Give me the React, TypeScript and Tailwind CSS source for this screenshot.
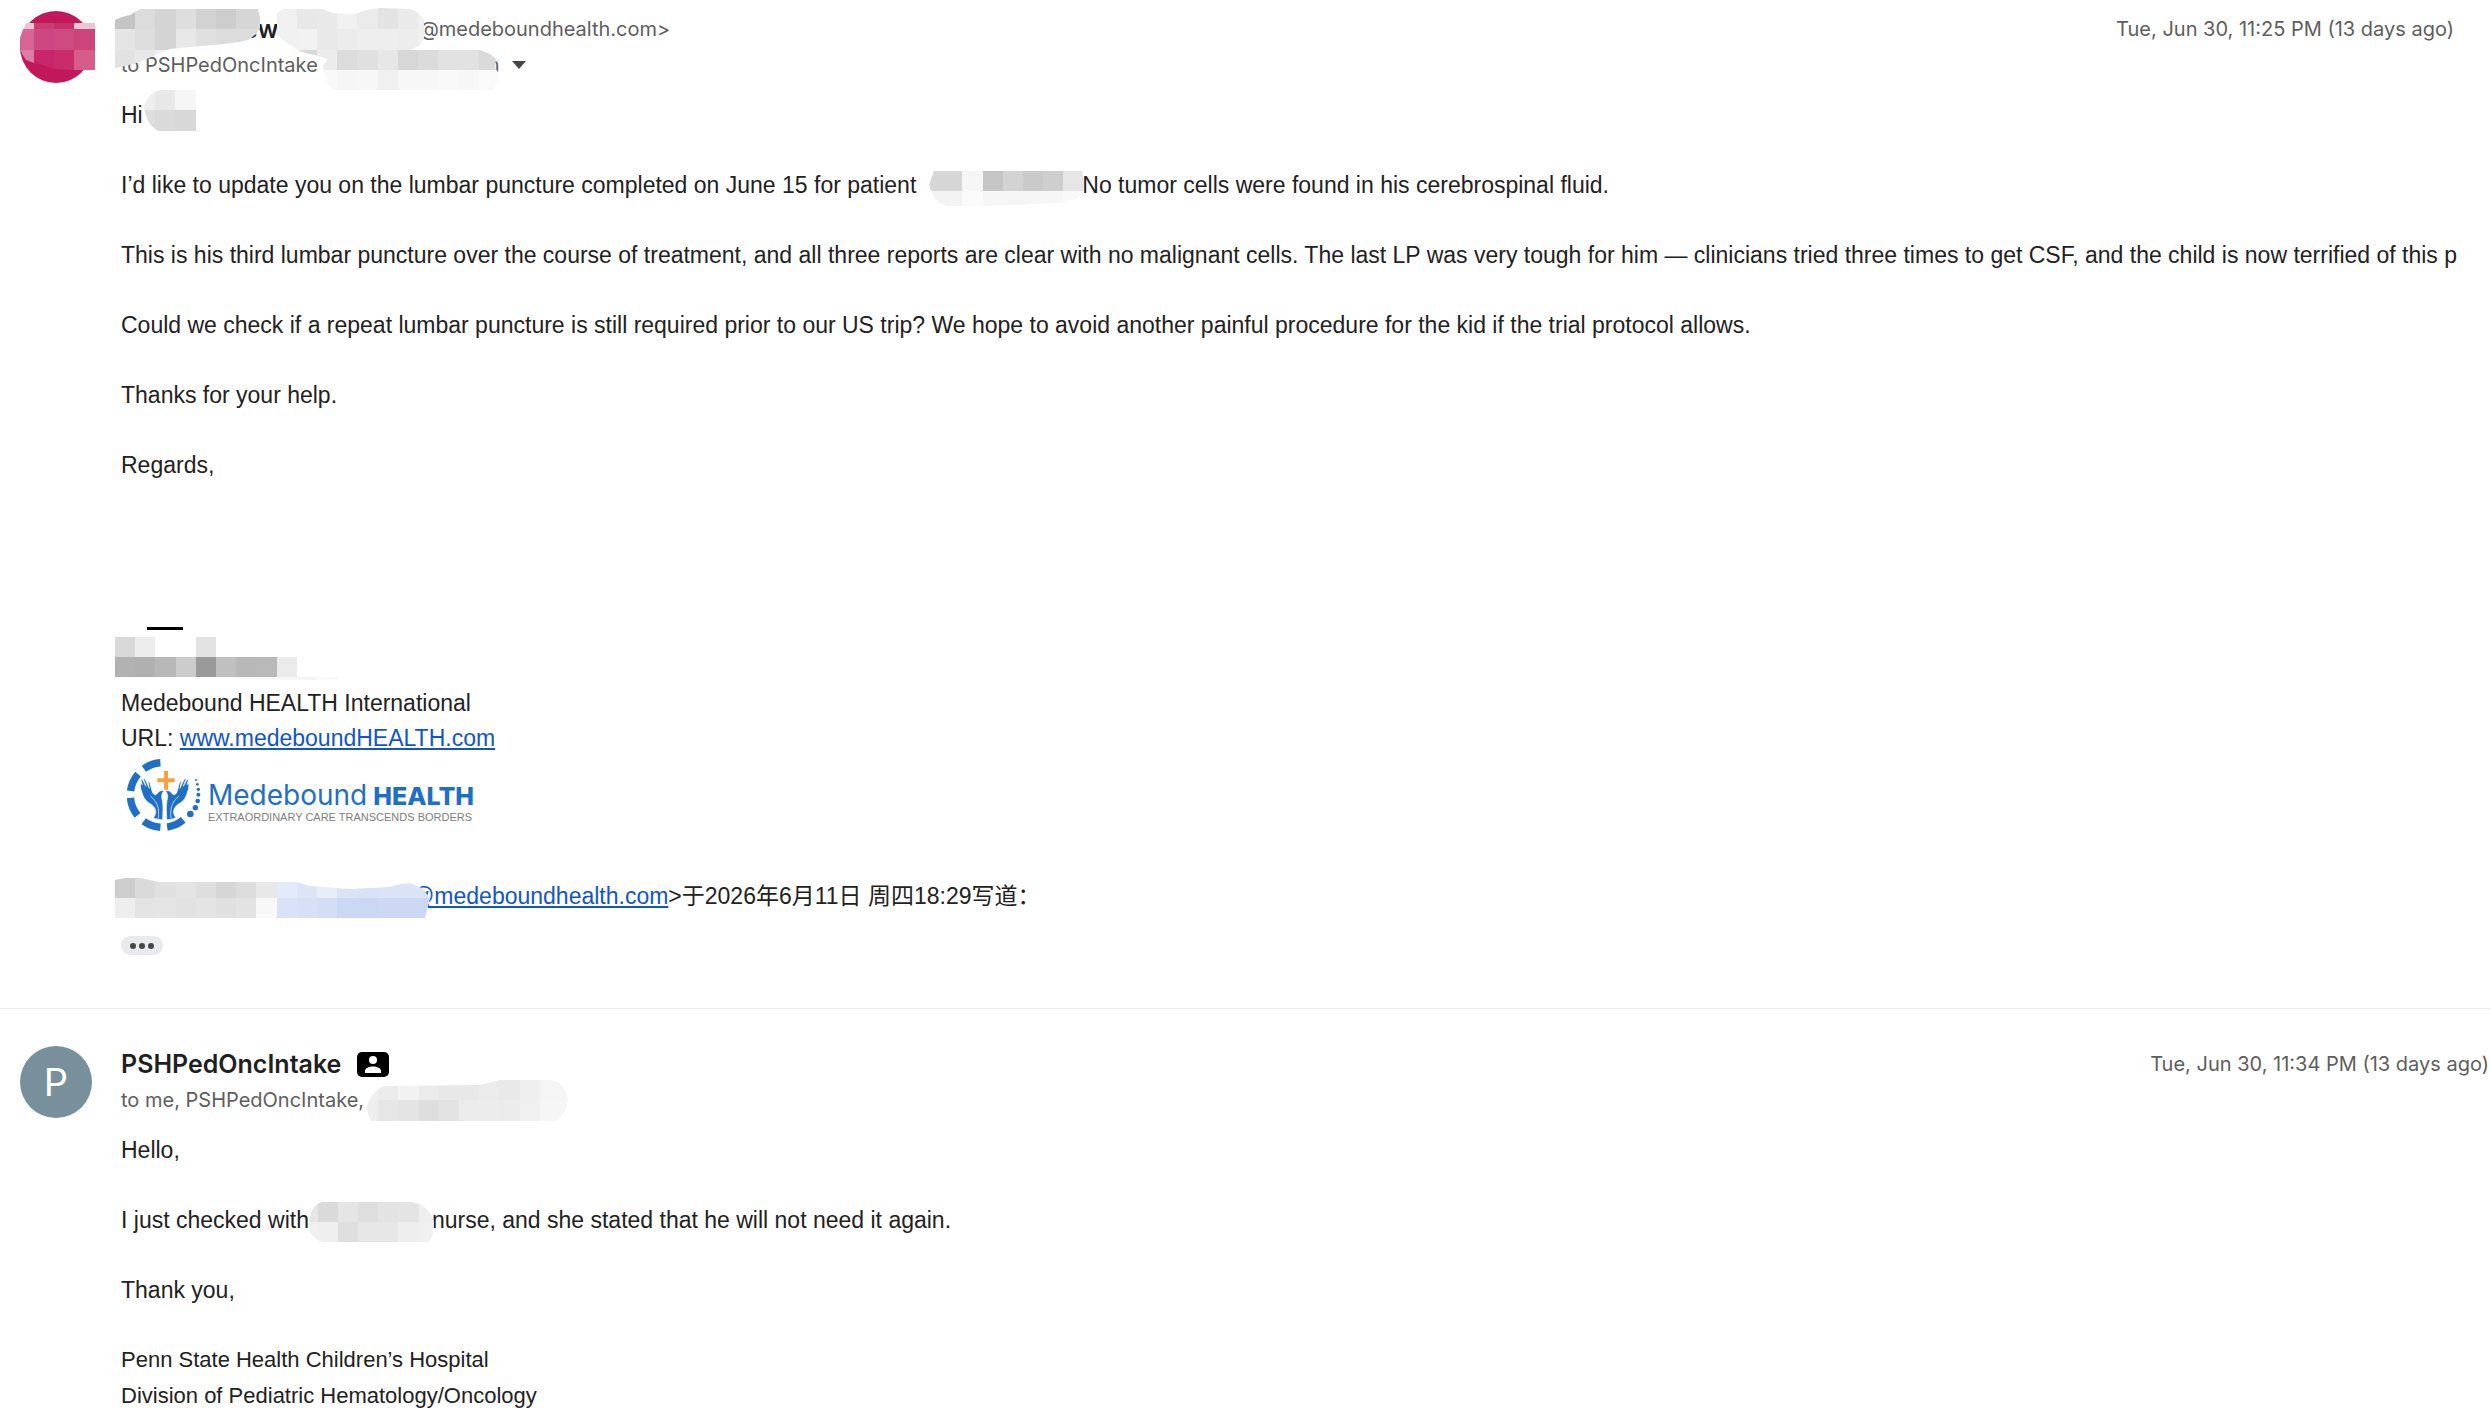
import { ReactNode } from 'react';

type Row = {
  x: number;
  y: number;
  h: number;
  colors: string[];
};

interface MosaicProps {
  id: string;
  viewBox: string;
  outline: string;
  rows: Row[];
  className: string;
}

const CELL = 20.2;

// Pixelated cover that hides a private name or address
function Mosaic({ id, viewBox, outline, rows, className }: MosaicProps) {
  return (
    <svg viewBox={viewBox} className={`absolute ${className}`} aria-hidden="true">
      <clipPath id={id}>
        <path d={outline} />
      </clipPath>
      <g clipPath={`url(#${id})`} shapeRendering="crispEdges">
        {rows.map((row) =>
          row.colors.map((color, i) => (
            <rect
              key={`${row.y}-${i}`}
              x={row.x + i * CELL}
              y={row.y}
              width={CELL + 0.3}
              height={row.h}
              fill={color}
            />
          ))
        )}
      </g>
    </svg>
  );
}

interface MessageProps {
  avatar: ReactNode;
  sender: ReactNode;
  recipients: ReactNode;
  date: string;
  className: string;
  children: ReactNode;
}

function Message({ avatar, sender, recipients, date, className, children }: MessageProps) {
  return (
    <article className={`flex gap-[29px] pl-5 ${className}`}>
      {avatar}
      <div className="min-w-0 flex-1">
        <header className="relative font-[Inter,sans-serif] text-[20px] leading-[36px] text-[#5e5e5e]">
          <div className="flex justify-between">
            <div className="flex items-center">{sender}</div>
            <time>{date}</time>
          </div>
          <div className="flex items-center">{recipients}</div>
        </header>
        <div className="mt-[15px]">{children}</div>
      </div>
    </article>
  );
}

function LogoHand() {
  return (
    <path d="M190 650 C202 636 198 621 185 611 C172 604 163 595 158 581 L152 562 L151 546 L157 551 L152 534 L158 537 L168 556 L159 531 L165 534 L178 562 L174 541 L179 543 L187 573 C191 582 198 584 203 576 C208 569 216 567 222 570 C214 577 214 588 217 599 C221 616 218 636 218 656 C208 656 199 654 190 650 Z" />
  );
}

function Logo() {
  return (
    <div className="flex h-20">
      <svg viewBox="93 465 261 240" className="h-20 w-[87px]" role="img" aria-label="Medebound HEALTH">
        <g fill="none" stroke="#1f6fc6" strokeWidth="22">
          <path d="M161.7 503 A97 97 0 0 1 211.2 485.2" />
          <path d="M121.7 570.2 A97 97 0 0 1 144.1 519.1" />
          <path d="M142.6 643 A97 97 0 0 1 121.4 590.5" />
          <path d="M211.2 678.8 A97 97 0 0 1 161 660.5" />
          <path d="M279.7 656.8 A97 97 0 0 1 231.5 678.1" />
        </g>
        <g fill="#1f6fc6" stroke="#fff" strokeWidth="2">
          <LogoHand />
          <g transform="translate(448 0) scale(-1 1)">
            <LogoHand />
          </g>
        </g>
        <g fill="none" stroke="#fff" strokeWidth="2">
          <path d="M181 585 C203 604 208 620 205 652" />
          <path d="M267 585 C245 604 240 620 243 652" />
        </g>
        <path d="M222 510 H234 V532 H254 V544 H234 V566 H222 V544 H202 V532 H222 Z" fill="#f9a03f" />
        <g fill="#1f6fc6">
          <circle cx="301" cy="639" r="10" />
          <circle cx="316" cy="620" r="8" />
          <circle cx="323" cy="600" r="7" />
          <circle cx="325" cy="581" r="6" />
          <circle cx="325" cy="565" r="5" />
          <circle cx="322" cy="550" r="4" />
          <circle cx="318" cy="537" r="3" />
        </g>
      </svg>
      <div className="pt-6">
        <div className="flex items-baseline gap-1.5 font-[Inter,sans-serif] leading-[30px] text-[#1f6fc6]">
          <span className="text-[28px]">Medebound</span>
          <span className="text-[25px] font-extrabold">HEALTH</span>
        </div>
        <div className="text-[11px] leading-[12px] text-[#808080]">EXTRAORDINARY CARE TRANSCENDS BORDERS</div>
      </div>
    </div>
  );
}

function OwnAvatar() {
  return (
    <div className="relative size-[72px] shrink-0 rounded-full bg-[#c2185b]">
      <Mosaic
        id="m-avatar"
        viewBox="20 23 75 47"
        className="left-0 top-3 h-[47px] w-[75px]"
        outline="M26 23 H95 V70 H74 L54 69 L40 64 L34 63 L26 60 L22 54 L20 47 V38 L22 32 Z"
        rows={[
          { x: 13.8, y: 23, h: 6, colors: ['#ecc5d2', '#c83c71', '#c43068', '#ecc5d2', '#ecc5d2'] },
          { x: 13.8, y: 29, h: 21, colors: ['#d66596', '#cd4880', '#cf4a80', '#cd447a', '#cd447a'] },
          { x: 13.8, y: 50, h: 20, colors: ['#dc7da3', '#c82668', '#c92c6a', '#d65c8a', '#d65c8a'] },
        ]}
      />
    </div>
  );
}

export default function App() {
  return (
    <main className="overflow-hidden bg-white pt-[11px] font-['Liberation_Sans','Noto_Sans_CJK_SC',sans-serif] text-[23px] leading-[35px] whitespace-nowrap text-[#222222]">
      <Message
        className="pr-[37px] pb-[53px]"
        date="Tue, Jun 30, 11:25 PM (13 days ago)"
        avatar={<OwnAvatar />}
        sender={
          <>
            <span className="pl-[122px] text-[25px] font-semibold text-[#1f1f1f]">ew</span>
            <span className="pl-[141px]">@medeboundhealth.com&gt;</span>
          </>
        }
        recipients={
          <>
            <span>to PSHPedOncIntake</span>
            <span className="pl-[170px]">n</span>
            <button type="button" aria-label="Show details" className="ml-3">
              <svg viewBox="0 0 14 8" className="h-2 w-3.5" fill="#444746">
                <path d="M0 0 H14 L7 8 Z" />
              </svg>
            </button>
            <Mosaic
              id="m-sender"
              viewBox="115 8 146 61"
              className="-top-[3px] -left-1.5 h-[61px] w-[146px]"
              outline="M115 20 L122 17 L130 15 L140 9 H258 L260 17 V28 L256 34 L250 39 L240 42 L215 45 L190 47 L170 49 L158 54 L140 62 L125 66 L115 68 Z"
              rows={[
                { x: 115, y: 8, h: 21, colors: ['#c4c4c4', '#dcdcdc', '#d4d4d4', '#dedede', '#d2d2d2', '#cdcdcd', '#d6d6d6', '#d6d6d6'] },
                { x: 115, y: 29, h: 21, colors: ['#e5e5e5', '#dedede', '#d4d4d4', '#e8e8e8', '#e0e0e0', '#dcdcdc', '#dcdcdc', '#dcdcdc'] },
                { x: 115, y: 50, h: 20, colors: ['#e2e2e2', '#e8e8e8', '#eeeeee'] },
              ]}
            />
            <Mosaic
              id="m-address"
              viewBox="275 8 227 82"
              className="-top-[3px] left-[154px] h-[82px] w-[227px]"
              outline="M275 20 L277 13 L283 9 H322 L333 13 L355 14 L366 10 L380 8 L410 9 L419 13 L424 20 V38 L420 45 L411 50 H480 L490 54 L496 59 L495 68 L498 72 L498 80 L494 90 H334 L328 85 L325 75 L323 66 L328 59 L315 55 L305 53 L298 50 L283 40 L277 34 Z"
              rows={[
                { x: 276.6, y: 8, h: 21, colors: ['#f0f0f0', '#e8e8e8', '#e9e9e9', '#f1f1f1', '#ebebeb', '#e3e3e3', '#eaeaea', '#f0f0f0'] },
                { x: 276.6, y: 29, h: 21, colors: ['#f0f0f0', '#f2f2f2', '#e9e9e9', '#ececec', '#eeeeee', '#eeeeee', '#ededed', '#f0f0f0'] },
                { x: 296.8, y: 50, h: 20, colors: ['#d8d8d8', '#ececec', '#dcdcdc', '#e0e0e0', '#e7e7e7', '#d7d7d7', '#dbdbdb', '#e2e2e2', '#e2e2e2', '#dadada', '#dadada'] },
                { x: 317, y: 70, h: 20, colors: ['#f9f9f9', '#f6f6f6', '#f7f7f7', '#f0f0f0', '#f7f7f7', '#f7f7f7', '#f9f9f9', '#f7f7f7', '#fafafa', '#fafafa'] },
              ]}
            />
          </>
        }
      >
        <p className="relative">
          Hi
          <Mosaic
            id="m-greeting"
            viewBox="144 87 52 44"
            className="-top-[11px] left-[23px] h-11 w-[52px]"
            outline="M196 90 H160 Q146 94 144 108 Q146 124 158 131 H196 Z"
            rows={[
              { x: 135, y: 87, h: 23, colors: ['#eeeeee', '#e8e8e8', '#f6f6f6', '#f6f6f6'] },
              { x: 135, y: 110, h: 21, colors: ['#dedede', '#dadada', '#d8d8d8', '#d8d8d8'] },
            ]}
          />
        </p>
        <p className="mt-[35px]">
          I’d like to update you on the lumbar puncture completed on June 15 for patient
          <span className="relative inline-block w-[166px]">
            <Mosaic
              id="m-patient"
              viewBox="932 171 155 36"
              className="-top-[22px] left-[13px] h-9 w-[155px]"
              outline="M937 171 H1085 L1087 180 L1086 191 Q1082 200 1070 202 L1025 205 L986 206 H950 Q938 203 935 193 L932 185 Z"
              rows={[
                { x: 925, y: 171, h: 20, colors: ['#d6d6d6', '#d6d6d6', '#f6f6f6', '#c6c6c6', '#d3d3d3', '#cacaca', '#cecece', '#e6e6e6', '#e6e6e6'] },
                { x: 925, y: 191, h: 16, colors: ['#f3f3f3', '#f3f3f3', '#fafafa', '#f6f6f6', '#f6f6f6', '#f6f6f6', '#f6f6f6', '#f9f9f9', '#f9f9f9'] },
              ]}
            />
          </span>
          No tumor cells were found in his cerebrospinal fluid.
        </p>
        <p className="mt-[35px]">
          This is his third lumbar puncture over the course of treatment, and all three reports are clear with no
          malignant cells. The last LP was very tough for him — clinicians tried three times to get CSF, and the child is
          now terrified of this p
        </p>
        <p className="mt-[35px]">
          Could we check if a repeat lumbar puncture is still required prior to our US trip? We hope to avoid another
          painful procedure for the kid if the trial protocol allows.
        </p>
        <p className="mt-[35px]">Thanks for your help.</p>
        <p className="mt-[35px]">Regards,</p>

        <hr className="mt-[144px] ml-[26px] h-[3px] w-9 border-0 bg-black" />
        <div className="relative h-14">
          <Mosaic
            id="m-signature"
            viewBox="115 635 240 48"
            className="top-[5px] -left-1.5 h-12 w-60"
            outline="M115 637 L135 635 H196 V637 H353 V678 L323 680 H115 Z"
            rows={[
              { x: 115, y: 637, h: 20, colors: ['#d9d9d9', '#ededed', '#ffffff', '#ffffff', '#e3e3e3'] },
              { x: 115, y: 657, h: 20, colors: ['#b2b2b2', '#b0b0b0', '#b8b8b8', '#cccccc', '#9a9a9a', '#c0c0c0', '#b8b8b8', '#b9b9b9', '#ebebeb'] },
              { x: 216, y: 677, h: 3, colors: ['#fefefe', '#fafafa', '#f9f9f9', '#f7f7f7', '#f5f5f5', '#fafafa'] },
            ]}
          />
        </div>
        <p>Medebound HEALTH International</p>
        <p>
          URL:{' '}
          <a href="#website" className="text-[#1155cc] underline">
            www.medeboundHEALTH.com
          </a>
        </p>
        <Logo />

        <p className="relative mt-[43px] pl-[290px]">
          <a href="#mail" className="text-[#1155cc] underline">
            @medeboundhealth.com
          </a>
          &gt;于2026年6月11日 周四18:29写道：
          <Mosaic
            id="m-quote"
            viewBox="115 877 315 42"
            className="-top-0.5 -left-1.5 h-[42px] w-[315px]"
            outline="M115 880 L125 878 H140 L160 882 H297 L310 886 L350 889 L390 887 L400 884 L410 883 L422 888 L430 898 L425 918 H115 Z"
            rows={[
              { x: 115, y: 877, h: 21, colors: ['#cdcdcd', '#dadada', '#e0e0e0', '#e4e4e4', '#dedede', '#d6d6d6', '#dcdcdc', '#e8e8e8', '#e3eaf8', '#dce4f6', '#e9ecf9', '#dbe4f7', '#d8e1f6', '#dbe4f7', '#dbe4f7', '#dbe4f7'] },
              { x: 115, y: 898, h: 20, colors: ['#eeeeee', '#e4e4e4', '#e5e5e5', '#e2e2e2', '#e4e4e4', '#e0e0e0', '#e3e3e3', '#f8f8f8', '#d9e2f7', '#d7e0f5', '#d3def5', '#cad8f4', '#cad8f4', '#cdd9f4', '#cdd9f4', '#cdd9f4'] },
            ]}
          />
        </p>
        <button
          type="button"
          aria-label="Show trimmed content"
          className="mt-[22px] flex h-[19px] w-[42px] items-center justify-center gap-[3px] rounded-full bg-[#e8eaed]"
        >
          <span className="size-1.5 rounded-full bg-[#444746]" />
          <span className="size-1.5 rounded-full bg-[#444746]" />
          <span className="size-1.5 rounded-full bg-[#444746]" />
        </button>
      </Message>

      <Message
        className="border-t border-[#eceff1] pt-[37px] pr-0.5"
        date="Tue, Jun 30, 11:34 PM (13 days ago)"
        avatar={
          <div className="flex size-[72px] shrink-0 items-center justify-center rounded-full bg-[#78909c] font-[Inter,sans-serif] text-[38px] text-white">
            P
          </div>
        }
        sender={
          <>
            <span className="text-[25px] font-semibold text-[#1f1f1f]">PSHPedOncIntake</span>
            <svg viewBox="0 0 32 25" className="ml-4 h-[25px] w-8" role="img" aria-label="Contact">
              <rect width="32" height="25" rx="5" fill="#000" />
              <circle cx="16" cy="8" r="4" fill="#fff" />
              <path d="M8 21 V19 C8 16 12 14.5 16 14.5 S24 16 24 19 V21 Z" fill="#fff" />
            </svg>
          </>
        }
        recipients={
          <>
            <span>to me, PSHPedOncIntake,</span>
            <Mosaic
              id="m-recipient"
              viewBox="367 1079 202 43"
              className="top-[33px] left-[246px] h-[43px] w-[202px]"
              outline="M383 1086 L480 1085 L500 1080 H552 Q566 1085 568 1100 Q567 1114 556 1121 H371 L367 1110 Q367 1096 383 1086 Z"
              rows={[
                { x: 358, y: 1079, h: 21, colors: ['#f0f0f0', '#ececec', '#f2f2f2', '#ebebeb', '#e8e8e8', '#e8e8e8', '#ebebeb', '#e9e9e9', '#efefef', '#f5f5f5', '#f5f5f5'] },
                { x: 358, y: 1100, h: 21, colors: ['#eeeeee', '#e6e6e6', '#e4e4e4', '#dedede', '#e3e3e3', '#ebebeb', '#ececec', '#ebebeb', '#f0f0f0', '#f6f6f6', '#f6f6f6'] },
              ]}
            />
          </>
        }
      >
        <p>Hello,</p>
        <p className="mt-[35px]">
          I just checked with
          <span className="relative inline-block w-[123px]">
            <Mosaic
              id="m-nurse"
              viewBox="309 1202 125 40"
              className="-top-[26px] left-0 h-10 w-[125px]"
              outline="M322 1202 H412 Q430 1206 434 1222 Q434 1236 428 1242 H322 Q310 1238 309 1226 Q309 1206 322 1202 Z"
              rows={[
                { x: 297.3, y: 1202, h: 20, colors: ['#e6e6e6', '#dadada', '#e5e5e5', '#dfdfdf', '#e3e3e3', '#e4e4e4', '#eeeeee'] },
                { x: 297.3, y: 1222, h: 20, colors: ['#f0f0f0', '#efefef', '#dfdfdf', '#e7e7e7', '#e7e7e7', '#eeeeee', '#f0f0f0'] },
              ]}
            />
          </span>
          nurse, and she stated that he will not need it again.
        </p>
        <p className="mt-[35px]">Thank you,</p>
        <p className="mt-[34px] text-[22px] leading-[36px]">
          Penn State Health Children’s Hospital
          <br />
          Division of Pediatric Hematology/Oncology
        </p>
      </Message>
    </main>
  );
}
